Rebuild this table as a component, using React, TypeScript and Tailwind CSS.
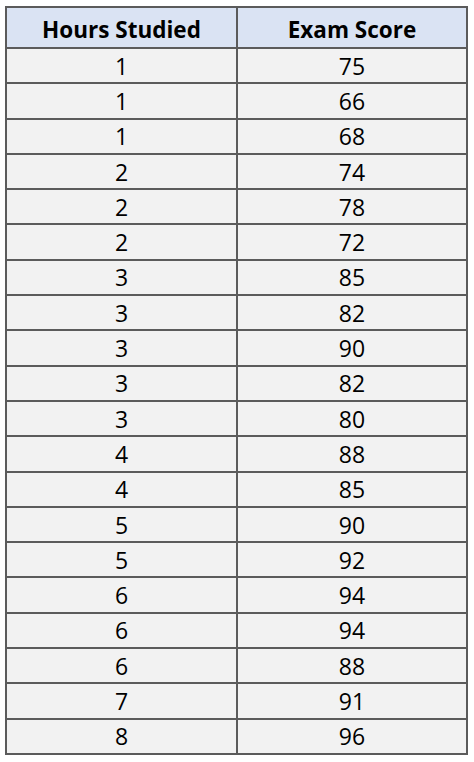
import React from "react";

const rows: [number, number][] = [
  [1, 75], [1, 66], [1, 68], [2, 74], [2, 78], [2, 72], [3, 85], [3, 82], [3, 90], [3, 82],
  [3, 80], [4, 88], [4, 85], [5, 90], [5, 92], [6, 94], [6, 94], [6, 88], [7, 91], [8, 96],
];

export default function App() {
  return (
    <div className="w-[474px] h-[762px] bg-white pt-[6px] pl-[5px]" style={{ fontFamily: '"Open Sans", sans-serif' }}>
      <table className="border-collapse border-2 border-[#5b5b5b] text-black">
        <thead>
          <tr className="bg-[#dae3f3] h-[41px]">
            <th className="w-[231px] border-2 border-[#5b5b5b] text-[22.5px] font-bold leading-none p-0 pt-[5px]">Hours Studied</th>
            <th className="w-[230px] border-2 border-[#5b5b5b] text-[22.5px] font-bold leading-none p-0 pt-[5px]">Exam Score</th>
          </tr>
        </thead>
        <tbody>
          {rows.map(([h, s], i) => (
            <tr key={i} className="bg-[#f2f2f2] h-[35.3px]">
              <td className="border-2 border-[#5b5b5b] text-center text-[23px] leading-none p-0 pt-[1px]">{h}</td>
              <td className="border-2 border-[#5b5b5b] text-center text-[23px] leading-none p-0 pt-[1px]">{s}</td>
            </tr>
          ))}
        </tbody>
      </table>
    </div>
  );
}
